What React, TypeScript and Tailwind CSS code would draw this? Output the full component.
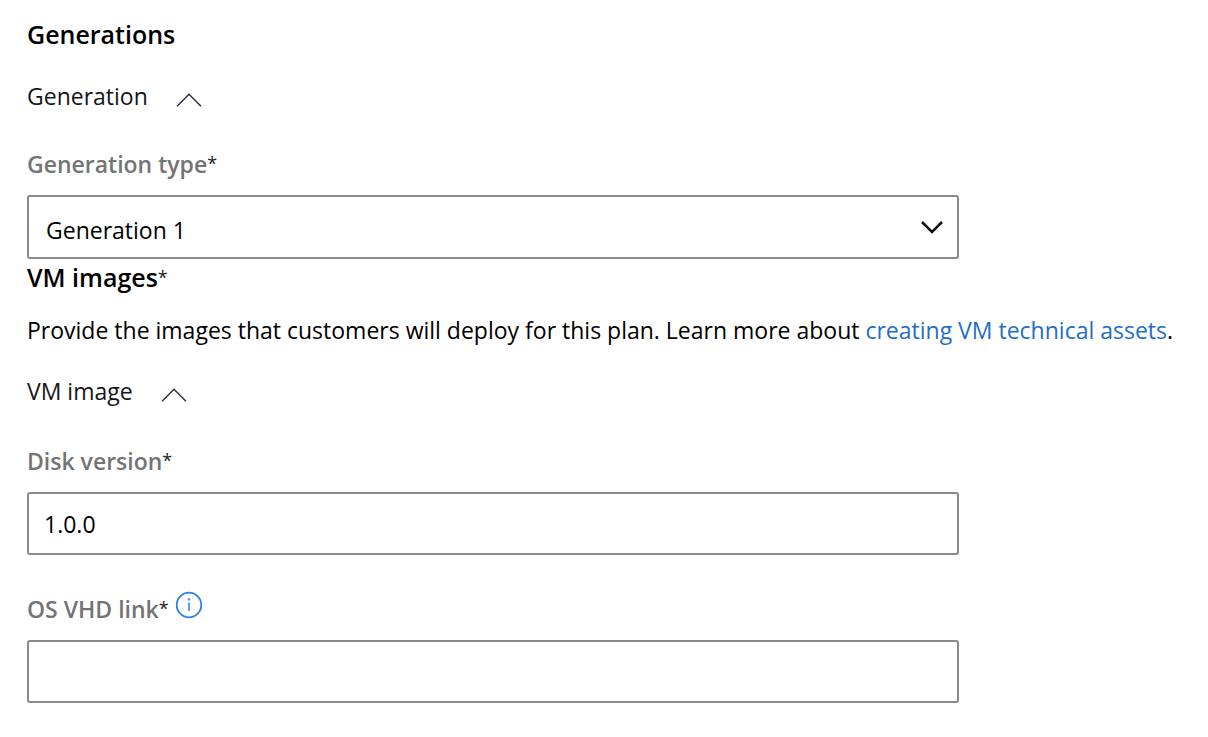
import { useState, type ReactNode } from "react";

function SectionToggle({
  label,
  open,
  onToggle,
}: {
  label: string;
  open: boolean;
  onToggle: () => void;
}) {
  return (
    <button
      type="button"
      aria-expanded={open}
      onClick={onToggle}
      className="flex items-center gap-7 text-[#161616]"
    >
      {label}
      <svg
        viewBox="0 0 26 14"
        className={open ? "mt-2 h-3.5 w-[26px]" : "mt-2 h-3.5 w-[26px] rotate-180"}
        fill="none"
        stroke="#35304a"
        strokeWidth="1.5"
        aria-hidden="true"
      >
        <path d="M1 13.2 13 1.2l12 12" />
      </svg>
    </button>
  );
}

function RequiredMark() {
  return (
    <span className="align-[3px] text-[18px] leading-none font-normal text-[#222222]">*</span>
  );
}

function FieldLabel({ htmlFor, children }: { htmlFor: string; children: ReactNode }) {
  return (
    <label htmlFor={htmlFor} className="font-semibold text-[#747474]">
      {children}
      <RequiredMark />
    </label>
  );
}

export default function App() {
  const [generationOpen, setGenerationOpen] = useState(true);
  const [imageOpen, setImageOpen] = useState(true);
  const [version, setVersion] = useState("1.0.0");
  const [link, setLink] = useState("");

  return (
    <main className="min-h-screen bg-white px-[27px] pt-[18px] pb-8 font-['Open_Sans','Noto_Sans',sans-serif] text-[23px] leading-8 text-black">
      <h2 className="text-[25px] leading-8 font-semibold">Generations</h2>

      <div className="mt-[30px]">
        <SectionToggle
          label="Generation"
          open={generationOpen}
          onToggle={() => setGenerationOpen(!generationOpen)}
        />
      </div>

      {generationOpen && (
        <div className="mt-9 flex max-w-[932px] flex-col gap-[15px]">
          <FieldLabel htmlFor="generation-type">Generation type</FieldLabel>
          <div className="grid items-center">
            <select
              id="generation-type"
              defaultValue="1"
              className="col-start-1 row-start-1 h-16 w-full appearance-none rounded-[3px] border-2 border-[#8a8a8a] bg-white pt-1.5 pr-14 pl-[17px]"
            >
              <option value="1">Generation 1</option>
              <option value="2">Generation 2</option>
            </select>
            <svg
              viewBox="0 0 22 14"
              className="pointer-events-none col-start-1 row-start-1 mr-4 h-3.5 w-[22px] justify-self-end"
              fill="none"
              stroke="#111111"
              strokeWidth="2.5"
              aria-hidden="true"
            >
              <path d="M1 2l10 10L21 2" />
            </svg>
          </div>
        </div>
      )}

      <h2 className="mt-0.5 text-[25px] leading-8 font-semibold">
        VM images
        <RequiredMark />
      </h2>
      <p className="mt-[21px]">
        Provide the images that customers will deploy for this plan. Learn more about{" "}
        <a href="#vm-technical-assets" className="text-[#1f6fc5]">
          creating VM technical assets
        </a>
        .
      </p>

      <div className="mt-[29px]">
        <SectionToggle
          label="VM image"
          open={imageOpen}
          onToggle={() => setImageOpen(!imageOpen)}
        />
      </div>

      {imageOpen && (
        <div className="mt-[38px] flex max-w-[932px] flex-col gap-[38px]">
          <div className="flex flex-col gap-[15px]">
            <FieldLabel htmlFor="disk-version">Disk version</FieldLabel>
            <input
              id="disk-version"
              type="text"
              value={version}
              onChange={(event) => setVersion(event.target.value)}
              className="h-[63px] w-full rounded-[3px] border-2 border-[#8a8a8a] px-[15px]"
            />
          </div>
          <div className="flex flex-col gap-[15px]">
            <div className="flex h-8 items-center gap-1.5">
              <FieldLabel htmlFor="vhd-link">OS VHD link</FieldLabel>
              <button type="button" aria-label="About the OS VHD link" className="mb-2">
                <svg viewBox="0 0 28 28" className="size-7" fill="none" aria-hidden="true">
                  <circle cx="14" cy="14" r="12.3" stroke="#2b82dc" strokeWidth="1.8" />
                  <path d="M14 11.5v8.5" stroke="#5b9fe6" strokeWidth="2" />
                  <circle cx="14" cy="8.3" r="1.4" fill="#5b9fe6" />
                </svg>
              </button>
            </div>
            <input
              id="vhd-link"
              type="text"
              value={link}
              onChange={(event) => setLink(event.target.value)}
              className="h-[63px] w-full rounded-[3px] border-2 border-[#8a8a8a] px-[15px]"
            />
          </div>
        </div>
      )}
    </main>
  );
}
